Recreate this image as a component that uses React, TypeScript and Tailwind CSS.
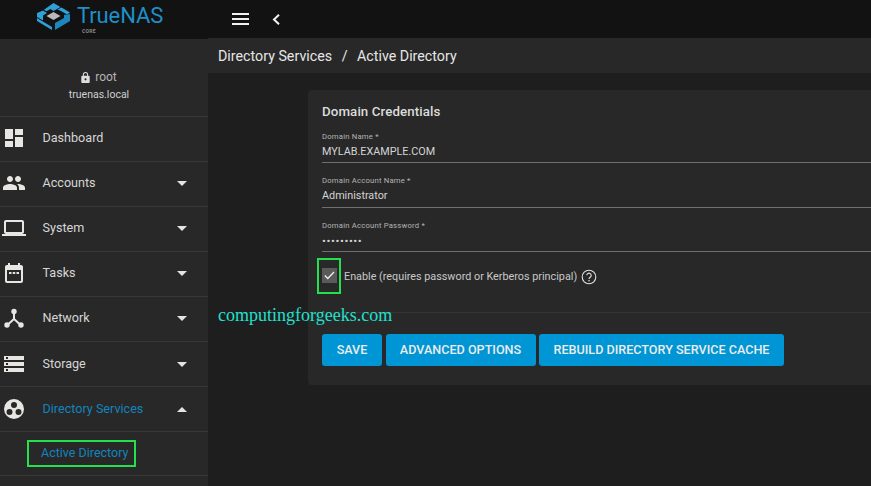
import React from "react";

const Icons: Record<string, React.ReactNode> = {
  dashboard: <path d="M3 13h8V3H3v10zm0 8h8v-6H3v6zm10 0h8V11h-8v10zm0-18v6h8V3h-8z" />,
  accounts: <path d="M16 11c1.66 0 2.99-1.34 2.99-3S17.66 5 16 5s-3 1.34-3 3 1.34 3 3 3zm-8 0c1.66 0 2.99-1.34 2.99-3S9.66 5 8 5 5 6.34 5 8s1.34 3 3 3zm0 2c-2.33 0-7 1.17-7 3.5V19h14v-2.5C15 14.17 10.33 13 8 13zm8 0c-.29 0-.62.02-.97.05 1.16.84 1.97 1.97 1.97 3.45V19h6v-2.5c0-2.33-4.67-3.5-7-3.5z" />,
  system: <path d="M20 18c1.1 0 1.99-.9 1.99-2L22 6c0-1.1-.9-2-2-2H4c-1.1 0-2 .9-2 2v10c0 1.1.9 2 2 2H0v2h24v-2h-4zM4 6h16v10H4V6z" />,
  tasks: <path d="M19 4h-1V2h-2v2H8V2H6v2H5c-1.1 0-2 .9-2 2v14c0 1.1.9 2 2 2h14c1.1 0 2-.9 2-2V6c0-1.1-.9-2-2-2zm0 16H5V9h14v11zM7 11h2.5v2H7zm3.75 0h2.5v2h-2.5zM14.5 11H17v2h-2.5z" />,
  network: (
    <>
      <circle cx="12" cy="5.500" r="2.700" />
      <circle cx="5" cy="19" r="2.700" />
      <circle cx="19" cy="19" r="2.700" />
      <path d="M11 6h2v6.500l6 5.500-1.400 1.400L12 14.300l-5.600 5.100L5 18l6-5.500z" />
    </>
  ),
  storage: <path d="M2 20h20v-4H2v4zm2-3h2v2H4v-2zM2 4v4h20V4H2zm4 3H4V5h2v2zm-4 7h20v-4H2v4zm2-3h2v2H4v-2z" />,
  directory: <path fillRule="evenodd" d="M12 2a10 10 0 1 0 0 20 10 10 0 0 0 0-20zM12 5a3 3 0 1 1 0 6 3 3 0 0 1 0-6zM7.500 12a3 3 0 1 1 0 6 3 3 0 0 1 0-6zm9 0a3 3 0 1 1 0 6 3 3 0 0 1 0-6z" />,
};

const Caret = ({ up = false }: { up?: boolean }) => (
  <svg width="10" height="5" viewBox="0 0 10 5" className="text-[#e4e4e4]" fill="currentColor">
    <path d={up ? "M0 5L5 0l5 5z" : "M0 0l5 5 5-5z"} />
  </svg>
);

const items: [string, string][] = [
  ["Accounts", "accounts"],
  ["System", "system"],
  ["Tasks", "tasks"],
  ["Network", "network"],
];

function Row({ label, icon, caret, active, low }: { label: string; icon: string; caret?: "up" | "down"; active?: boolean; low?: boolean }) {
  return (
    <div className={"flex items-center h-[45px] border-b border-[#383838] shrink-0 " + (low ? "pb-0" : "pb-[2px]")}>
      <div className="w-[28px] flex justify-center">
        <svg width="24" height="24" viewBox="0 0 24 24" fill="#e8e6e3">{Icons[icon]}</svg>
      </div>
      <span className={"ml-[14.500px] text-[12.600px] flex-1 " + (active ? "text-[#1284bd]" : "text-[#d6d6d6]")}>{label}</span>
      {caret && <div className="mr-[21px] flex"><Caret up={caret === "up"} /></div>}
    </div>
  );
}

function Field({ label, value, dots }: { label: string; value: string; dots?: boolean }) {
  return (
    <div className="h-[44.300px] border-b border-[#6f6f6f] flex flex-col">
      <span className="text-[7.700px] leading-[10px] tracking-[0.2px] text-[#b4b4b4] mt-[13px]">{label}</span>
      <span className={"leading-[14px] mt-[3px] text-[#d4d4d4] " + (dots ? "text-[11.500px] tracking-[0.6px]" : "text-[10.800px]")}>{value}</span>
    </div>
  );
}

export default function App() {
  return (
    <div className="w-[871px] h-[486px] overflow-hidden relative flex flex-col bg-[#1e1e1e] font-['Roboto',sans-serif]">
      {/* Top bar */}
      <header className="h-[39px] shrink-0 bg-[#121212] flex items-center">
        <div className="w-[232px] flex items-center pl-[37px] shrink-0">
          <svg width="33" height="27" viewBox="0 0 33 27" className="-mt-[7px]">
            <path d="M16.500 0l7 4-7 4-3-2-4 2.200L7 6.800z" fill="#2ea2d8" />
            <path d="M24.500 4.500L33 9.500l-3 2-6-3.500-3.500-1.500z" fill="#2ea2d8" />
            <path d="M6 7.500l4 2.500-4 2.500v5L0 14V10z" fill="#2ea2d8" />
            <path d="M0 15l15 9v3L0 18z" fill="#2ea2d8" />
            <path d="M33 11v7L18 27v-7l9-5v-3z" fill="#1b87bd" />
            <path d="M16.500 9l7 4-7 4-7-4z" fill="#b9b9b9" />
          </svg>
          <div className="relative ml-[7px] -mt-[7px]">
            <span className="block text-[22px] leading-[22px] text-[#1f8fc8] font-normal tracking-[-0.1px]">TrueNAS</span>
            <span className="absolute left-[5px] top-[23px] text-[5px] leading-[6px] font-bold tracking-[0.3px] text-[#8a8a8a]">CORE</span>
          </div>
        </div>
        <svg width="17" height="13" viewBox="0 0 17 13" fill="#f2f2f2"><path d="M0 0h17v2H0zM0 5h17v2H0zM0 10h17v2H0z" /></svg>
        <svg width="8" height="11" viewBox="0 0 8 11" fill="none" stroke="#f2f2f2" strokeWidth="2" className="ml-[23px]"><path d="M7 .800L2 5.500l5 4.700" /></svg>
      </header>

      <div className="flex flex-1 min-h-0">
        {/* Sidebar */}
        <aside className="w-[208px] shrink-0 bg-[#282828] flex flex-col">
          <div className="h-[78px] shrink-0 border-b border-[#383838] flex flex-col items-center pt-[30px] pr-[10px]">
            <div className="flex items-center h-[16px]">
              <svg width="9" height="11" viewBox="4 1 16 21" fill="#dedede"><path d="M18 8h-1V6A5 5 0 0 0 7 6v2H6a2 2 0 0 0-2 2v10c0 1.100.9 2 2 2h12a2 2 0 0 0 2-2V10a2 2 0 0 0-2-2zm-6 9a2 2 0 1 1 0-4 2 2 0 0 1 0 4zm3.100-9H8.900V6a3.100 3.100 0 0 1 6.200 0v2z" /></svg>
              <span className="text-[12px] text-[#b4b4b4] ml-[5px]">root</span>
            </div>
            <span className="text-[10.500px] leading-[14px] text-[#d0d0d0] mt-[3px]">truenas.local</span>
          </div>
          <Row label="Dashboard" icon="dashboard" />
          {items.map(([l, i]) => <Row key={l} label={l} icon={i} caret="down" />)}
          <Row label="Storage" icon="storage" caret="down" low />
          <Row label="Directory Services" icon="directory" caret="up" active low />
          <div className="h-[44px] shrink-0 border-b border-[#383838] flex items-center pl-[27px]">
            <div className="w-[109px] h-[27px] border-2 border-[#25e04c] flex items-center pl-[12px]">
              <span className="text-[12.500px] text-[#1284bd] whitespace-nowrap">Active Directory</span>
            </div>
          </div>
        </aside>

        {/* Main */}
        <main className="flex-1 min-w-0 flex flex-col">
          <div className="h-[35px] pt-[2px] shrink-0 bg-[#282828] flex items-center pl-[10px] text-[14.250px] text-[#e6e6e6] -mt-px">
            <span>Directory Services</span>
            <span className="mx-[9.500px]">/</span>
            <span>Active Directory</span>
          </div>
          <div className="pl-[100px] pt-[17px]">
            <section className="w-[600px] h-[295px] bg-[#282828] rounded-l-[4px] pl-[14px] pt-[14px] flex flex-col">
              <h2 className="text-[13.300px] leading-[16px] font-medium text-[#dcdcdc] tracking-[0.1px]">Domain Credentials</h2>
              <div className="flex flex-col -mt-[1px]">
                <Field label="Domain Name *" value="MYLAB.EXAMPLE.COM" />
                <Field label="Domain Account Name *" value="Administrator" />
                <Field label="Domain Account Password *" value="•••••••••" dots />
              </div>
              <div className="flex items-center -ml-[5px] mt-[4px] h-[42px]">
                <div className="w-[24px] h-[36px] -mt-[2px] border-2 border-[#25e04c] flex items-center justify-center shrink-0">
                  <div className="w-[15px] h-[15px] bg-[#5a5a5a] flex items-center justify-center">
                    <svg width="11" height="9" viewBox="0 0 11 9" fill="none" stroke="#f0f0f0" strokeWidth="1.300"><path d="M.800 4.500l3 3L10 1" /></svg>
                  </div>
                </div>
                <span className="ml-[3px] text-[10.800px] text-[#c8c8c8] whitespace-nowrap">Enable (requires password or Kerberos principal)</span>
                <svg width="16" height="16" viewBox="0 0 16 16" fill="none" className="ml-[4px]">
                  <circle cx="8" cy="8" r="6.800" stroke="#e0e0e0" strokeWidth="1.100" />
                  <path d="M5.800 6.300a2.200 2.200 0 1 1 3.400 1.900c-.800.500-1.200.900-1.200 1.800" stroke="#e0e0e0" strokeWidth="1.100" />
                  <circle cx="8" cy="11.800" r=".800" fill="#e0e0e0" />
                </svg>
              </div>
              <div className="border-t border-[#343434] mt-[14.500px] -ml-[14px]" />
              <div className="flex gap-[3.500px] mt-[21px]">
                {[["SAVE", "w-[60px]"], ["ADVANCED OPTIONS", "w-[150px]"], ["REBUILD DIRECTORY SERVICE CACHE", "w-[245px]"]].map(([t, w]) => (
                  <button key={t} className={w + " h-[32px] rounded-[3px] bg-[#0095d5] text-[12.600px] font-medium text-[#ececec] flex items-center justify-center whitespace-nowrap"}>{t}</button>
                ))}
              </div>
            </section>
          </div>
        </main>
      </div>

      {/* Watermark over the page */}
      <span className="absolute left-[218px] top-[303px] text-[18px] leading-[24px] text-[#22e0cf] font-['Liberation_Serif',serif] whitespace-nowrap">computingforgeeks.com</span>
    </div>
  );
}
